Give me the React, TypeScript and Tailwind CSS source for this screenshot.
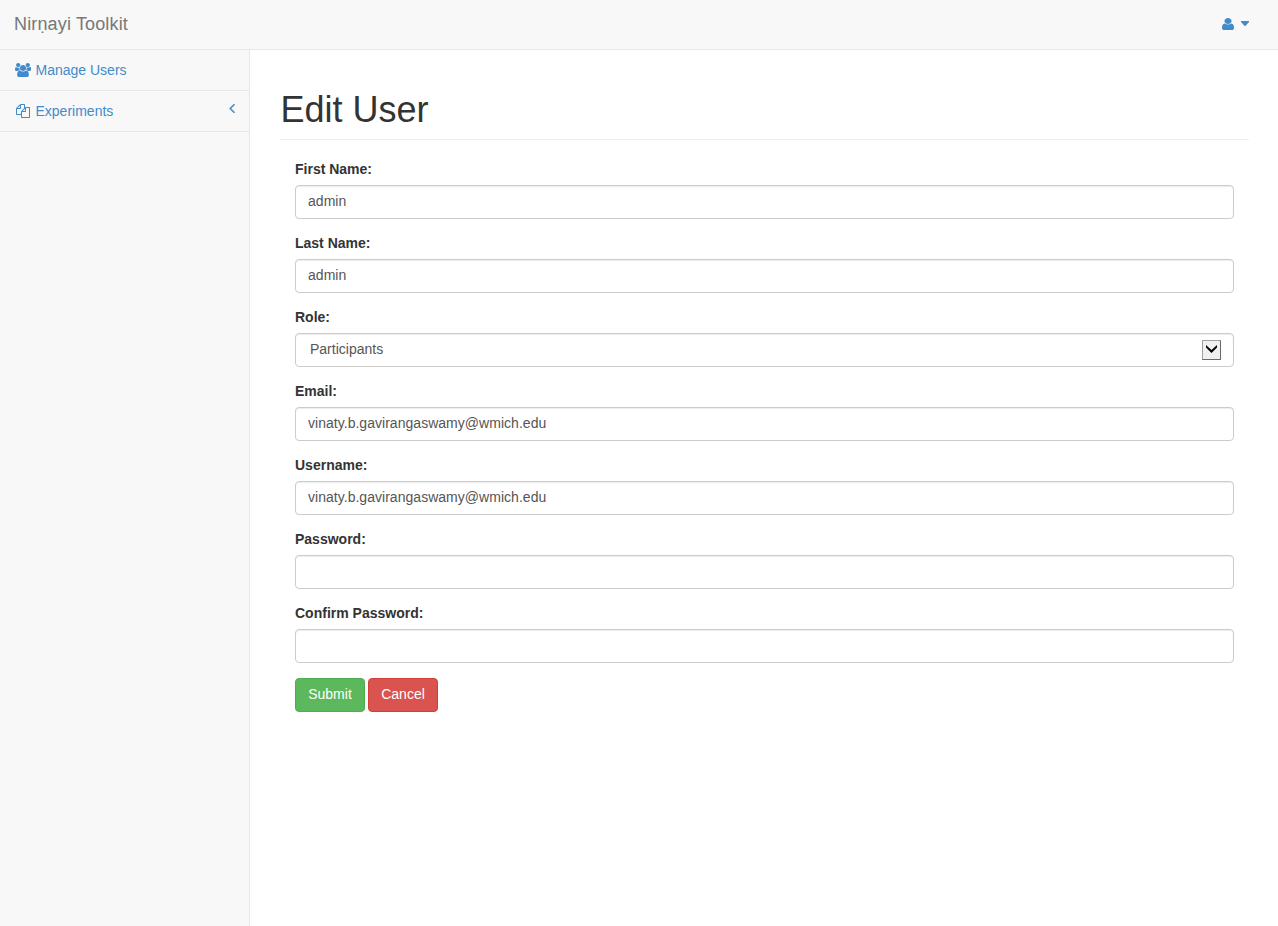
import type { ReactNode } from "react";

const UserIcon = () => (
  <svg viewBox="256 128 1280 1536" preserveAspectRatio="none" className="mb-[2px] h-3 w-3 fill-current">
    <path d="M1536 1399q0 109-62.5 187t-150.5 78h-854q-88 0-150.5-78t-62.5-187q0-85 8.5-160.5t31.5-152 58.5-131 94-89 134.5-34.5q131 128 313 128t313-128q76 0 134.5 34.5t94 89 58.5 131 31.5 152 8.5 160.5zm-256-887q0 159-112.5 271.5t-271.5 112.5-271.5-112.5-112.5-271.5 112.5-271.5 271.5-112.5 271.5 112.5 112.5 271.5z" />
  </svg>
);

const UsersIcon = () => (
  <svg viewBox="0 0 1920 1792" preserveAspectRatio="none" className="h-3.5 w-4 fill-current">
    <path d="M593 896q-162 5-265 128h-134q-82 0-138-40.5t-56-118.5q0-353 124-353 6 0 43.5 21t97.5 42.5 119 21.5q67 0 133-23-5 37-5 66 0 159 93 290zm1071 637q0 120-73 189.5t-194 69.5h-874q-121 0-194-69.5t-73-189.5q0-53 3.5-103.5t14-109 26.5-108.5 43-97.5 62-81 85.5-53.5 111.5-20q10 0 43 21.5t73 48 107 48 135 21.5 135-21.5 107-48 73-48 43-21.5q61 0 111.5 20t85.5 53.5 62 81 43 97.5 26.5 108.5 14 109 3.5 103.5zm-1024-1277q0 106-75 181t-181 75-181-75-75-181 75-181 181-75 181 75 75 181zm704 384q0 159-112.5 271.5t-271.5 112.5-271.5-112.5-112.5-271.5 112.5-271.5 271.5-112.5 271.5 112.5 112.5 271.5zm576 225q0 78-56 118.5t-138 40.5h-134q-103-123-265-128 93-131 93-290 0-29-5-66 66 23 133 23 59 0 119-21.5t97.5-42.5 43.5-21q124 0 124 353zm-128-609q0 106-75 181t-181 75-181-75-75-181 75-181 181-75 181 75 75 181z" />
  </svg>
);

const FilesIcon = () => (
  <svg viewBox="0 0 1792 1792" className="ml-px h-3.5 w-3.5 fill-current">
    <path d="M1696 384q40 0 68 28t28 68v1216q0 40-28 68t-68 28h-960q-40 0-68-28t-28-68v-288h-544q-40 0-68-28t-28-68v-672q0-40 20-88t48-76l408-408q28-28 76-48t88-20h416q40 0 68 28t28 68v328q68-40 128-40h416zm-544 213l-299 299h299v-299zm-640-384l-299 299h299v-299zm196 647l316-316v-416h-384v416q0 40-28 68t-68 28h-416v640h512v-256q0-40 20-88t48-76zm956 804v-1152h-384v416q0 40-28 68t-68 28h-416v640h896z" />
  </svg>
);

const AngleLeftIcon = () => (
  <svg viewBox="582 470 640 980" preserveAspectRatio="none" className="mb-[5px] h-[9px] w-[6px] fill-current stroke-current">
    <path strokeWidth="30" d="M1203 544q0 13-10 23l-393 393 393 393q10 10 10 23t-10 23l-50 50q-10 10-23 10t-23-10l-466-466q-10-10-10-23t10-23l466-466q10-10 23-10t23 10l50 50q10 10 10 23z" />
  </svg>
);

function NavItem({ icon, label, arrow }: { icon: ReactNode; label: string; arrow?: boolean }) {
  return (
    <a href="#" className="flex h-[41px] items-center border-b border-[#e7e7e7] pr-[14px] pl-[15px] text-[#428bca]">
      <span className="flex w-[20.5px]">{icon}</span>
      <span className="flex-1">{label}</span>
      {arrow && <AngleLeftIcon />}
    </a>
  );
}

const control =
  "block h-[34px] w-full rounded-[4px] border border-[#ccc] bg-white px-3 pt-[5px] pb-[7px] text-sm leading-5 tracking-[0.03px] text-[#555] shadow-[inset_0_1px_1px_rgba(0,0,0,0.075)] outline-none";

function Field({ label, value = "", type = "text" }: { label: string; value?: string; type?: string }) {
  return (
    <label className="mb-[14px] block">
      <span className="mb-[6px] block font-bold">{label}</span>
      <input type={type} defaultValue={value} className={control} />
    </label>
  );
}

export default function App() {
  return (
    <div className="flex h-[926px] flex-col overflow-hidden bg-white font-['Liberation_Sans',Arial,sans-serif] text-sm leading-5 text-[#333]">
      <header className="flex h-[50px] shrink-0 items-center justify-between border-b border-[#e7e7e7] bg-[#f8f8f8] pr-[29px] pl-[14px]">
        <a href="#" className="pb-[2px] text-lg leading-5 tracking-[0.15px] text-[#777]">Nirṇayi Toolkit</a>
        <button className="flex items-center gap-[7px] text-[#428bca]">
          <UserIcon />
          <svg viewBox="0 0 8 5" className="mb-[2px] h-[5px] w-2 fill-current">
            <path d="M0 0h8v1L4.4 5h-.8L0 1z" />
          </svg>
        </button>
      </header>
      <div className="flex min-h-0 flex-1">
        <nav className="w-[250px] shrink-0 border-r border-[#e7e7e7] bg-[#f8f8f8]">
          <NavItem icon={<UsersIcon />} label="Manage Users" />
          <NavItem icon={<FilesIcon />} label="Experiments" arrow />
        </nav>
        <main className="flex-1 pr-[29px] pl-[30px]">
          <h1 className="mt-10 mb-[19px] border-b border-[#eee] pb-[9px] pl-[0.5px] text-4xl leading-10">Edit User</h1>
          <form className="px-[15px]">
            <Field label="First Name:" value="admin" />
            <Field label="Last Name:" value="admin" />
            <div className="mb-[14px]">
              <div className="mb-[6px] font-bold">Role:</div>
              <div className="flex h-[34px] items-center justify-between rounded-[4px] border border-[#ccc] pr-3 pl-[14px] text-[#555] shadow-[inset_0_1px_1px_rgba(0,0,0,0.075)]">
                <span className="pb-[2px]">Participants</span>
                <span className="flex h-5 w-[19px] items-center justify-center border border-[#696969] border-t-[#a0a0a0] border-l-[#a0a0a0] bg-[#f0f0f0]">
                  <svg viewBox="0 0 11 8" className="mb-[2px] h-2 w-[11px]">
                    <path d="M0 0 5.5 5 11 0v2.6L5.5 8 0 2.6z" fill="#000" />
                  </svg>
                </span>
              </div>
            </div>
            <Field label="Email:" value="vinaty.b.gavirangaswamy@wmich.edu" />
            <Field label="Username:" value="vinaty.b.gavirangaswamy@wmich.edu" />
            <Field label="Password:" type="password" />
            <Field label="Confirm Password:" type="password" />
            <div className="mt-[15px] flex gap-[3px] text-white">
              <button type="button" className="h-[34px] w-[70px] rounded-[4px] border border-[#4cae4c] bg-[#5cb85c] pb-[2px]">Submit</button>
              <button type="button" className="h-[34px] w-[70px] rounded-[4px] border border-[#d43f3a] bg-[#d9534f] pb-[2px]">Cancel</button>
            </div>
          </form>
        </main>
      </div>
    </div>
  );
}
